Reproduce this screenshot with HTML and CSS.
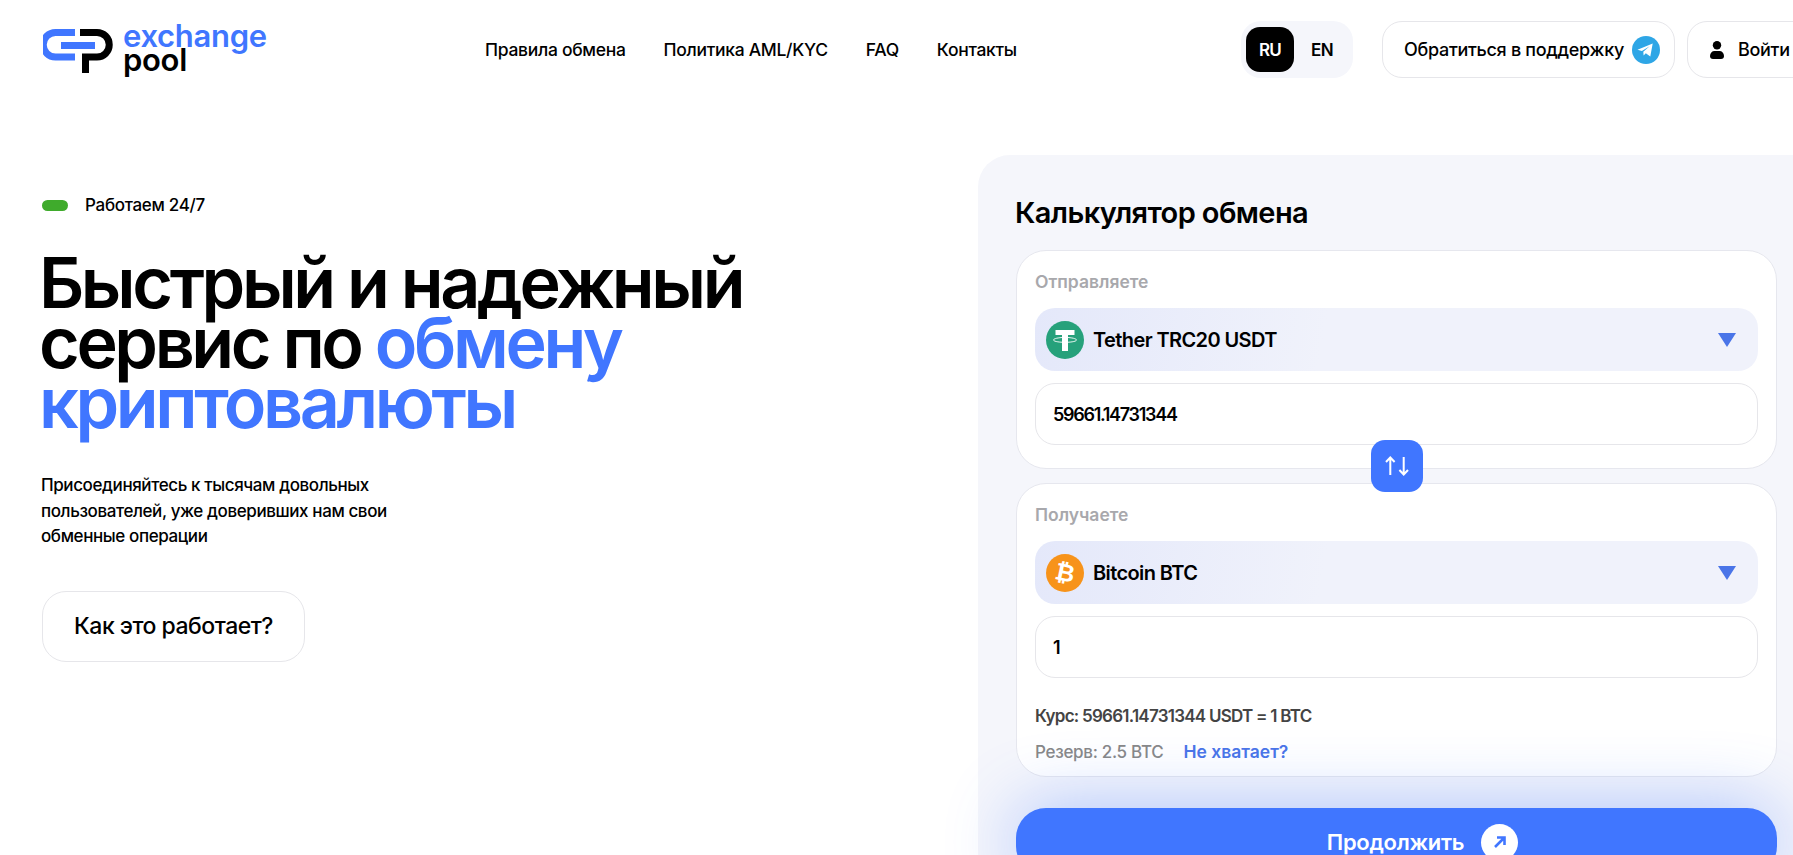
FILE: index.html
```html
<!DOCTYPE html>
<html lang="ru">
<head>
    <meta charset="UTF-8">
    <meta name="viewport" content="width=device-width, initial-scale=1.0">
    <title>Exchange Pool</title>
    <link rel="stylesheet" href="styles.css">
</head>
<body>
    <header class="header">
        <a class="logo" href="#">
            <svg class="logo-mark" viewBox="0 0 70 44" width="70" height="44">
                <path d="M32 3.500H12.500a12.250 12.250 0 0 0 0 24.500H32" fill="none" stroke="#4076ff" stroke-width="7"/>
                <path d="M18 16.500H52" fill="none" stroke="#4076ff" stroke-width="7"/>
                <path d="M37 3.500H54a12.250 12.250 0 0 1 0 24.500H42.500V44" fill="none" stroke="#000" stroke-width="7"/>
            </svg>
            <span class="logo-text">
                <span class="logo-top">exchange</span>
                <span class="logo-bottom">pool</span>
            </span>
        </a>

        <nav class="nav">
            <a href="#">Правила обмена</a>
            <a href="#">Политика AML/KYC</a>
            <a href="#">FAQ</a>
            <a href="#">Контакты</a>
        </nav>

        <div class="lang">
            <span class="lang-item active">RU</span>
            <span class="lang-item">EN</span>
        </div>

        <a class="head-btn support" href="#">
            Обратиться в поддержку
            <svg viewBox="0 0 28 28" width="28" height="28">
                <circle cx="14" cy="14" r="14" fill="#2ea6e6"/>
                <path d="M5.500 13.800 20.700 7.500 18.300 20.600 13.800 17.300 11.600 19.400 11.300 15.700 17.600 10.300 9.900 15.100Z" fill="#fff"/>
            </svg>
        </a>

        <a class="head-btn login" href="#">
            <svg viewBox="0 0 14 18" width="14" height="18">
                <circle cx="7" cy="4.200" r="4.200" fill="#000"/>
                <path d="M0 15c0-3 2-5 4.500-5h5c2.500 0 4.500 2 4.500 5 0 2-1 3-3 3H3c-2 0-3-1-3-3Z" fill="#000"/>
            </svg>
            Войти
        </a>
    </header>

    <main class="hero">
        <section class="intro">
            <div class="status">
                <span class="status-dot"></span>
                Работаем 24/7
            </div>
            <h1 class="hero-title">Быстрый и надежный сервис по <span class="accent">обмену криптовалюты</span></h1>
            <p class="hero-text">Присоединяйтесь к тысячам довольных пользователей, уже доверивших нам свои обменные операции</p>
            <a class="how-btn" href="#">Как это работает?</a>
        </section>

        <section class="panel">
            <h2 class="panel-title">Калькулятор обмена</h2>

            <div class="card">
                <div class="card-label">Отправляете</div>
                <div class="select">
                    <svg class="coin" viewBox="0 0 38 38" width="38" height="38">
                        <circle cx="19" cy="19" r="19" fill="#26a17b"/>
                        <path d="M9.500 9H28.500V14H22V30H16V14H9.500Z" fill="#fff"/>
                        <path d="M16 16.500C10 17 7.500 18 7.500 19S11 21.300 19 21.300 30.500 20 30.500 19 28 17 22 16.500" fill="none" stroke="#fff" stroke-width="0.900"/>
                    </svg>
                    <span class="select-name">Tether TRC20 USDT</span>
                    <span class="arrow"></span>
                </div>
                <div class="amount">59661.14731344</div>
            </div>

            <div class="swap">
                <svg viewBox="0 0 24 24" width="24" height="24" fill="none" stroke="#fff" stroke-width="2">
                    <path d="M5.300 21V4M1 8l4.300-4.500L9.600 8"/>
                    <path d="M18.700 3V20M14.400 16l4.300 4.500L23 16"/>
                </svg>
            </div>

            <div class="card card-second">
                <div class="card-label">Получаете</div>
                <div class="select">
                    <svg class="coin" viewBox="0 0 38 38" width="38" height="38">
                        <circle cx="19" cy="19" r="19" fill="#f7931a"/>
                        <text x="19" y="27" text-anchor="middle" class="btc-glyph" transform="rotate(12 19 19)">₿</text>
                    </svg>
                    <span class="select-name">Bitcoin BTC</span>
                    <span class="arrow"></span>
                </div>
                <div class="amount">1</div>
                <div class="rate">Курс: 59661.14731344 USDT = 1 BTC</div>
                <div class="reserve">
                    <span>Резерв: 2.5 BTC</span>
                    <a href="#">Не хватает?</a>
                </div>
            </div>

            <a class="continue" href="#">
                Продолжить
                <span class="continue-icon">
                    <svg viewBox="0 0 14 14" width="14" height="14" fill="none" stroke="#4076ff" stroke-width="2.600">
                        <path d="M2 12 11 3M4 2.500H11.500V10"/>
                    </svg>
                </span>
            </a>
        </section>
    </main>
</body>
</html>
```

FILE: styles.css
```css
* {
    box-sizing: border-box;
}

html, body {
    margin: 0;
    height: 100%;
    overflow: hidden;
}

body {
    background: #fff;
    color: #000;
    font-family: 'Inter', 'Noto Sans', sans-serif;
}

a {
    color: inherit;
    text-decoration: none;
}

.header {
    display: flex;
    align-items: flex-start;
    width: 1900px;
    height: 155px;
    padding: 21px 0 0 43px;
}

.logo {
    display: flex;
    align-items: flex-start;
    gap: 10px;
    width: 442px;
    padding-top: 8px;
}

.logo-text {
    display: flex;
    flex-direction: column;
    font-size: 31px;
    font-weight: 600;
    line-height: 24px;
    letter-spacing: -0.3px;
    margin-top: -5px;
}

.logo-top {
    color: #4076ff;
}

.nav {
    display: flex;
    gap: 38px;
    width: 756px;
    height: 57px;
    align-items: center;
    font-size: 17.500px;
    font-weight: 500;
    letter-spacing: -0.3px;
}

.lang {
    display: flex;
    align-items: center;
    gap: 4px;
    width: 112px;
    height: 57px;
    padding: 0 5px;
    background: #f5f6fb;
    border-radius: 20px;
}

.lang-item {
    width: 48px;
    height: 45px;
    display: flex;
    align-items: center;
    justify-content: center;
    font-size: 17px;
    font-weight: 600;
    letter-spacing: -0.700px;
    border-radius: 14px;
}

.lang-item.active {
    background: #000;
    color: #fff;
}

.head-btn {
    display: flex;
    align-items: center;
    height: 57px;
    border: 1px solid #e6e6ea;
    border-radius: 20px;
    font-size: 18px;
    font-weight: 500;
    letter-spacing: -0.3px;
}

.support {
    gap: 8px;
    width: 293px;
    margin-left: 29px;
    padding-left: 21px;
}

.login {
    gap: 14px;
    width: 140px;
    margin-left: 12px;
    padding-left: 22px;
}

.hero {
    display: flex;
    align-items: flex-start;
}

.intro {
    width: 978px;
    padding: 40px 0 0 41px;
}

.status {
    display: flex;
    align-items: center;
    gap: 17px;
    font-size: 17px;
    font-weight: 500;
    letter-spacing: -0.3px;
    line-height: 20px;
    margin-bottom: 38px;
}

.status-dot {
    width: 26px;
    height: 11px;
    margin-left: 1px;
    background: #3fab2c;
    border-radius: 6px;
}

.hero-title {
    width: 760px;
    margin: 0 0 40px -2px;
    font-size: 70px;
    font-weight: 600;
    line-height: 60px;
    letter-spacing: -3.400px;
}

.accent {
    color: #4076ff;
}

.hero-text {
    width: 360px;
    margin: 0 0 41px;
    font-size: 17px;
    font-weight: 500;
    line-height: 25.500px;
    letter-spacing: -0.4px;
}

.how-btn {
    display: inline-flex;
    align-items: center;
    justify-content: center;
    margin-left: 1px;
    width: 263px;
    height: 71px;
    border: 1px solid #e6e6ea;
    border-radius: 24px;
    font-size: 23px;
    font-weight: 500;
    letter-spacing: -0.5px;
}

.panel {
    flex: 1;
    height: 760px;
    padding: 38px 16px 0 38px;
    background: #f5f6fb;
    border-radius: 32px 0 0 0;
    position: relative;
}

.panel-title {
    margin: 0 0 17px -1px;
    font-size: 29px;
    font-weight: 600;
    line-height: 40px;
    letter-spacing: -0.6px;
}

.card {
    height: 219px;
    padding: 19px 18px 0;
    background: #fff;
    border: 1px solid #e6e7ee;
    border-radius: 30px;
}

.card-second {
    height: 294px;
    margin-top: 14px;
}

.card-label {
    color: #a8a8ac;
    font-size: 17.500px;
    font-weight: 600;
    line-height: 24px;
    margin-bottom: 14px;
}

.select {
    display: flex;
    align-items: center;
    gap: 10px;
    height: 63px;
    padding: 0 22px 0 11px;
    background: linear-gradient(100deg, #e4e8fa, #f0f2fb 40%);
    border-radius: 20px;
}

.select-name {
    flex: 1;
    font-size: 20px;
    font-weight: 600;
    letter-spacing: -0.6px;
    padding-top: 1px;
    margin-left: -1px;
}

.arrow {
    width: 0;
    height: 0;
    border-left: 9px solid transparent;
    border-right: 9px solid transparent;
    border-top: 14px solid #4a75e8;
}

.amount {
    display: flex;
    align-items: center;
    height: 62px;
    margin-top: 12px;
    padding: 1px 0 0 17px;
    border: 1px solid #e6e6ea;
    border-radius: 20px;
    font-size: 18px;
    font-weight: 600;
    letter-spacing: -1.300px;
}

.swap {
    position: absolute;
    left: 393px;
    top: 285px;
    z-index: 2;
    display: flex;
    align-items: center;
    justify-content: center;
    width: 52px;
    height: 52px;
    background: #4076ff;
    border-radius: 14px;
}

.rate {
    margin-top: 26px;
    color: #444;
    font-size: 17px;
    font-weight: 600;
    line-height: 24px;
    letter-spacing: -0.750px;
}

.reserve {
    display: flex;
    gap: 20px;
    margin-top: 12px;
    color: #888;
    font-size: 17px;
    font-weight: 500;
    line-height: 24px;
    letter-spacing: -0.3px;
}

.reserve a {
    color: #4a75e8;
    font-size: 17.500px;
    font-weight: 600;
    letter-spacing: 0;
}

.continue {
    display: flex;
    align-items: center;
    justify-content: center;
    gap: 17px;
    height: 68px;
    margin-top: 31px;
    padding-left: 52px;
    background: #4076ff;
    border-radius: 30px;
    box-shadow: 0 0 70px rgba(64, 118, 255, 0.42);
    color: #fff;
    font-size: 22px;
    font-weight: 600;
    letter-spacing: -0.3px;
    position: relative;
}

.continue-icon {
    display: flex;
    align-items: center;
    justify-content: center;
    width: 37px;
    height: 37px;
    background: #fff;
    border-radius: 50%;
}

.coin {
    flex-shrink: 0;
}

.btc-glyph {
    fill: #fff;
    font-family: 'DejaVu Sans', sans-serif;
    font-size: 24px;
    font-weight: 700;
}
```
